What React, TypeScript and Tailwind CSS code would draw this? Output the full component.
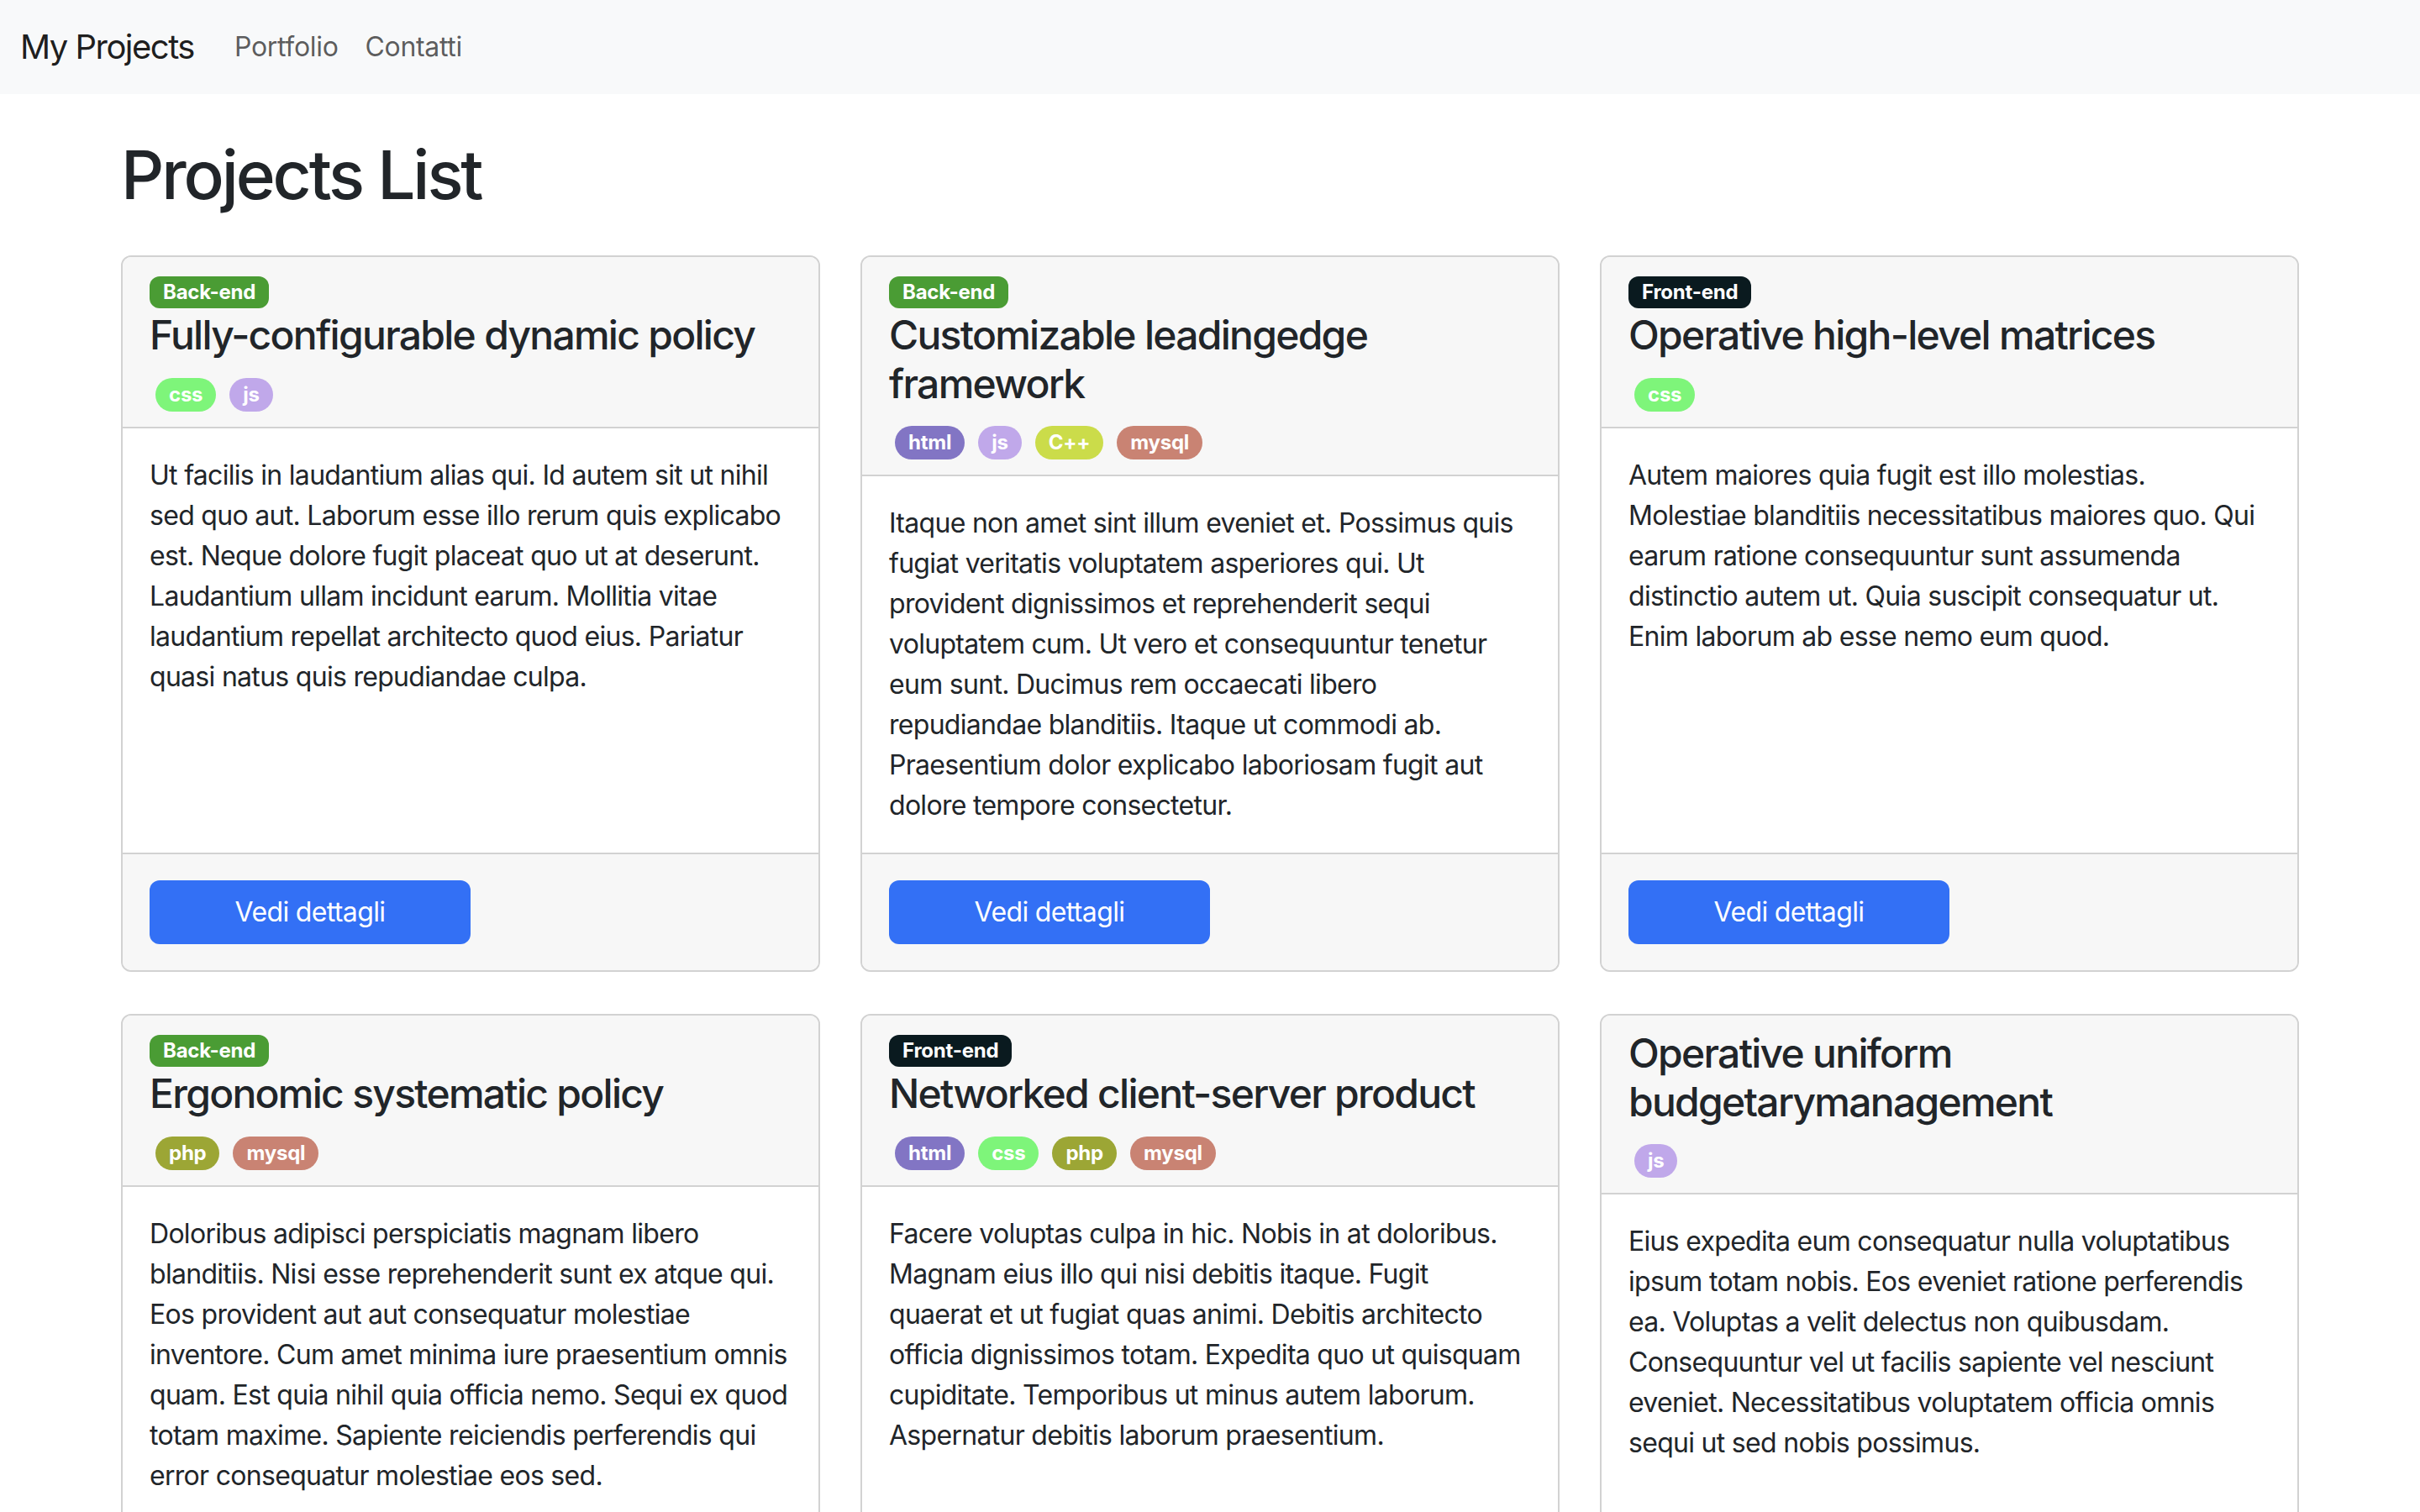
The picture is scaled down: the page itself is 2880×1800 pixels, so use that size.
import React from "react";

type Project = {
  category?: "Back-end" | "Front-end";
  title: string;
  tags: string[];
  lines: string[];
};

const tagColors: Record<string, string> = {
  html: "bg-[#8275c4]",
  css: "bg-[#7ef57a]",
  js: "bg-[#c0a8ea]",
  "C++": "bg-[#cbdc4a]",
  mysql: "bg-[#c98373]",
  php: "bg-[#9ca635]",
};

// description lines kept as in the original layout
const projects: Project[] = [
  {
    category: "Back-end",
    title: "Fully-configurable dynamic policy",
    tags: ["css", "js"],
    lines: [
      "Ut facilis in laudantium alias qui. Id autem sit ut nihil",
      "sed quo aut. Laborum esse illo rerum quis explicabo",
      "est. Neque dolore fugit placeat quo ut at deserunt.",
      "Laudantium ullam incidunt earum. Mollitia vitae",
      "laudantium repellat architecto quod eius. Pariatur",
      "quasi natus quis repudiandae culpa.",
    ],
  },
  {
    category: "Back-end",
    title: "Customizable leadingedge framework",
    tags: ["html", "js", "C++", "mysql"],
    lines: [
      "Itaque non amet sint illum eveniet et. Possimus quis",
      "fugiat veritatis voluptatem asperiores qui. Ut",
      "provident dignissimos et reprehenderit sequi",
      "voluptatem cum. Ut vero et consequuntur tenetur",
      "eum sunt. Ducimus rem occaecati libero",
      "repudiandae blanditiis. Itaque ut commodi ab.",
      "Praesentium dolor explicabo laboriosam fugit aut",
      "dolore tempore consectetur.",
    ],
  },
  {
    category: "Front-end",
    title: "Operative high-level matrices",
    tags: ["css"],
    lines: [
      "Autem maiores quia fugit est illo molestias.",
      "Molestiae blanditiis necessitatibus maiores quo. Qui",
      "earum ratione consequuntur sunt assumenda",
      "distinctio autem ut. Quia suscipit consequatur ut.",
      "Enim laborum ab esse nemo eum quod.",
    ],
  },
  {
    category: "Back-end",
    title: "Ergonomic systematic policy",
    tags: ["php", "mysql"],
    lines: [
      "Doloribus adipisci perspiciatis magnam libero",
      "blanditiis. Nisi esse reprehenderit sunt ex atque qui.",
      "Eos provident aut aut consequatur molestiae",
      "inventore. Cum amet minima iure praesentium omnis",
      "quam. Est quia nihil quia officia nemo. Sequi ex quod",
      "totam maxime. Sapiente reiciendis perferendis qui",
      "error consequatur molestiae eos sed.",
    ],
  },
  {
    category: "Front-end",
    title: "Networked client-server product",
    tags: ["html", "css", "php", "mysql"],
    lines: [
      "Facere voluptas culpa in hic. Nobis in at doloribus.",
      "Magnam eius illo qui nisi debitis itaque. Fugit",
      "quaerat et ut fugiat quas animi. Debitis architecto",
      "officia dignissimos totam. Expedita quo ut quisquam",
      "cupiditate. Temporibus ut minus autem laborum.",
      "Aspernatur debitis laborum praesentium.",
    ],
  },
  {
    title: "Operative uniform budgetarymanagement",
    tags: ["js"],
    lines: [
      "Eius expedita eum consequatur nulla voluptatibus",
      "ipsum totam nobis. Eos eveniet ratione perferendis",
      "ea. Voluptas a velit delectus non quibusdam.",
      "Consequuntur vel ut facilis sapiente vel nesciunt",
      "eveniet. Necessitatibus voluptatem officia omnis",
      "sequi ut sed nobis possimus.",
    ],
  },
];

const ProjectCard = ({ project }: { project: Project }) => {
  return (
    <div className="flex flex-col border-2 border-[#d2d2d2] rounded-[12px] overflow-hidden bg-white">
      <div className="bg-[#f7f7f7] px-[32px] py-[16px] border-b-2 border-[#d2d2d2]">
        {project.category && (
          <div className="h-[48px] flex items-center pt-[4px]">
            <span
              className={
                "inline-block text-[24px] font-bold leading-[24px] tracking-[-0.01em] text-white px-[16px] py-[7px] rounded-[12px] " +
                (project.category === "Back-end" ? "bg-[#4a9c34]" : "bg-[#0a1a1f]")
              }
            >
              {project.category}
            </span>
          </div>
        )}
        <h4 className="text-[48px] leading-[57.6px] font-medium tracking-[-0.036em] text-[#212529] mb-[16px]">
          {project.title}
        </h4>
        <div className="h-[48px] flex items-center gap-[16px] pl-[7px] pt-[4px]">
          {project.tags.map((tag) => (
            <span
              key={tag}
              className={
                "inline-block text-[24px] font-bold leading-[24px] tracking-[-0.01em] text-white px-[16px] py-[8px] rounded-full " +
                tagColors[tag]
              }
            >
              {tag}
            </span>
          ))}
        </div>
      </div>
      <div className="flex-1 p-[32px] text-[32px] leading-[48px] tracking-[-0.022em] text-[#212529]">
        {project.lines.map((line) => (
          <span key={line} className="block whitespace-nowrap">
            {line}
          </span>
        ))}
      </div>
      <div className="bg-[#f7f7f7] px-[32px] py-[31px] border-t-2 border-[#d2d2d2]">
        <button className="w-1/2 h-[76px] bg-[#3370f5] text-white text-[32px] leading-[48px] tracking-[-0.02em] rounded-[12px]">
          Vedi dettagli
        </button>
      </div>
    </div>
  );
};

export default function App() {
  return (
    <div className="min-h-screen bg-white font-['Inter','Noto_Sans',sans-serif]">
      <nav className="bg-[#f8f9fa] h-[112px] flex items-center px-[24px]">
        <span className="text-[40px] leading-[60px] tracking-[-0.038em] text-black/90 mr-[32px]">
          My Projects
        </span>
        <a className="text-[32px] leading-[48px] tracking-[-0.01em] text-black/65 px-[16px]">Portfolio</a>
        <a className="text-[32px] leading-[48px] tracking-[-0.01em] text-black/65 px-[16px]">Contatti</a>
      </nav>
      <main className="max-w-[2640px] mx-auto px-[24px]">
        <h1 className="text-[80px] leading-[96px] font-medium tracking-[-0.039em] text-[#212529] mt-[48px] mb-[48px]">
          Projects List
        </h1>
        <div className="grid grid-cols-3 gap-x-[48px] gap-y-[50px] pb-[48px]">
          {projects.map((p) => (
            <ProjectCard key={p.title} project={p} />
          ))}
        </div>
      </main>
    </div>
  );
}
